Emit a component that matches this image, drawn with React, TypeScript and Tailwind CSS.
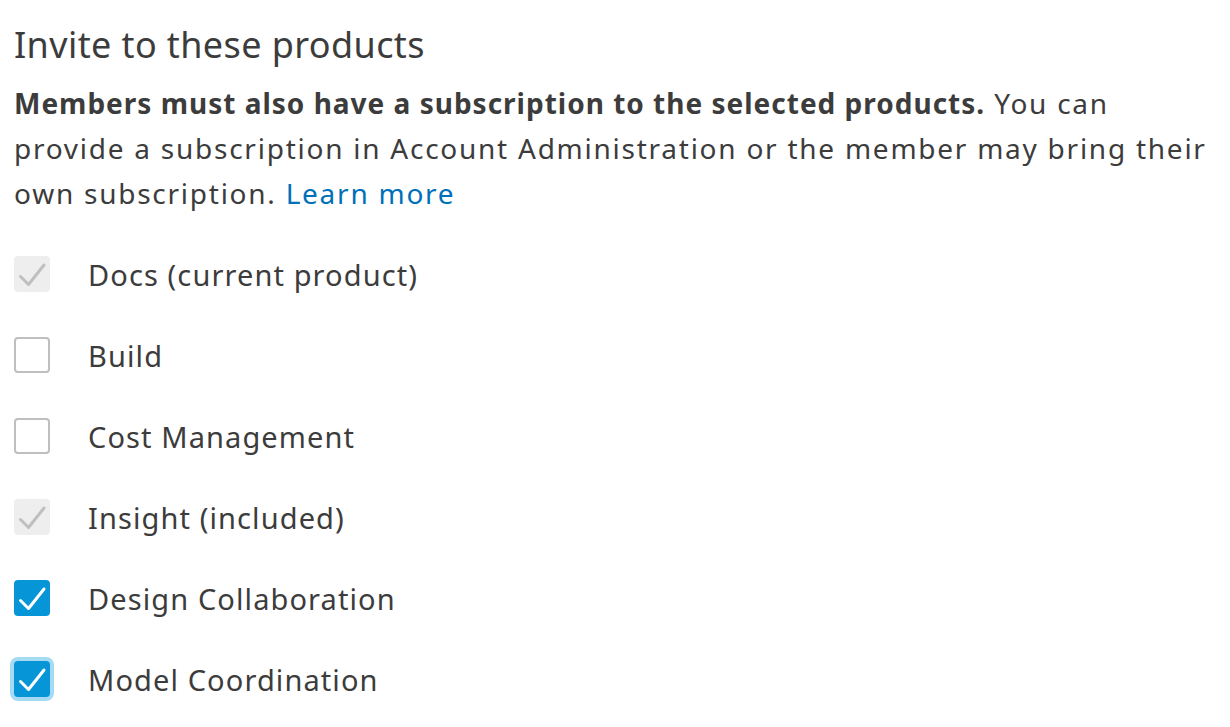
import React from "react";

type Product = {
  name: string;
  state: "disabled" | "off" | "on";
  focused?: boolean;
};

const products: Product[] = [
  { name: "Docs (current product)", state: "disabled" },
  { name: "Build", state: "off" },
  { name: "Cost Management", state: "off" },
  { name: "Insight (included)", state: "disabled" },
  { name: "Design Collaboration", state: "on" },
  { name: "Model Coordination", state: "on", focused: true },
];

function Check({ color }: { color: string }) {
  return (
    <svg width="36" height="36" viewBox="0 0 36 36" className="block">
      <polyline
        points="6.5,20.5 14.5,28.5 30,9"
        fill="none"
        stroke={color}
        strokeWidth="3"
        strokeLinecap="round"
        strokeLinejoin="round"
      />
    </svg>
  );
}

function Box({ product }: { product: Product }) {
  if (product.state === "disabled") {
    return (
      <div className="w-9 h-9 shrink-0 rounded-[4px] bg-[#eeeeee]">
        <Check color="#bfbfbf" />
      </div>
    );
  }
  if (product.state === "off") {
    return <div className="w-9 h-9 shrink-0 rounded-[4px] border-2 border-[#bfbfbf] bg-white" />;
  }
  return (
    <div
      className={`w-9 h-9 shrink-0 rounded-[4px] bg-[#0696d7] ${
        product.focused ? "ring-4 ring-[#a5daf3]" : ""
      }`}
    >
      <Check color="#ffffff" />
    </div>
  );
}

export default function App() {
  return (
    <main
      className="w-[1230px] h-[727px] bg-white text-[#3c3c3c] pl-[14px] overflow-hidden"
      style={{ fontFamily: '"Noto Sans", "Open Sans", sans-serif' }}
    >
      <h2 className="text-[36px] leading-[44px] pt-[23px] tracking-[0.4px]">Invite to these products</h2>

      <p className="text-[28px] leading-[45px] mt-[14px] tracking-[1.75px] whitespace-nowrap">
        <span className="font-bold tracking-[1px]">
          Members must also have a subscription to the selected products.
        </span>{" "}
        You can
        <br />
        provide a subscription in Account Administration or the member may bring their
        <br />
        own subscription. <span className="text-[#0070b8]">Learn more</span>
      </p>

      <ul className="mt-[40px] flex flex-col gap-[45px]">
        {products.map((product, index) => (
          <li key={index} className="flex items-center h-9">
            <Box product={product} />
            <span className="ml-[38px] text-[29px] leading-none tracking-[1.1px]">{product.name}</span>
          </li>
        ))}
      </ul>
    </main>
  );
}
